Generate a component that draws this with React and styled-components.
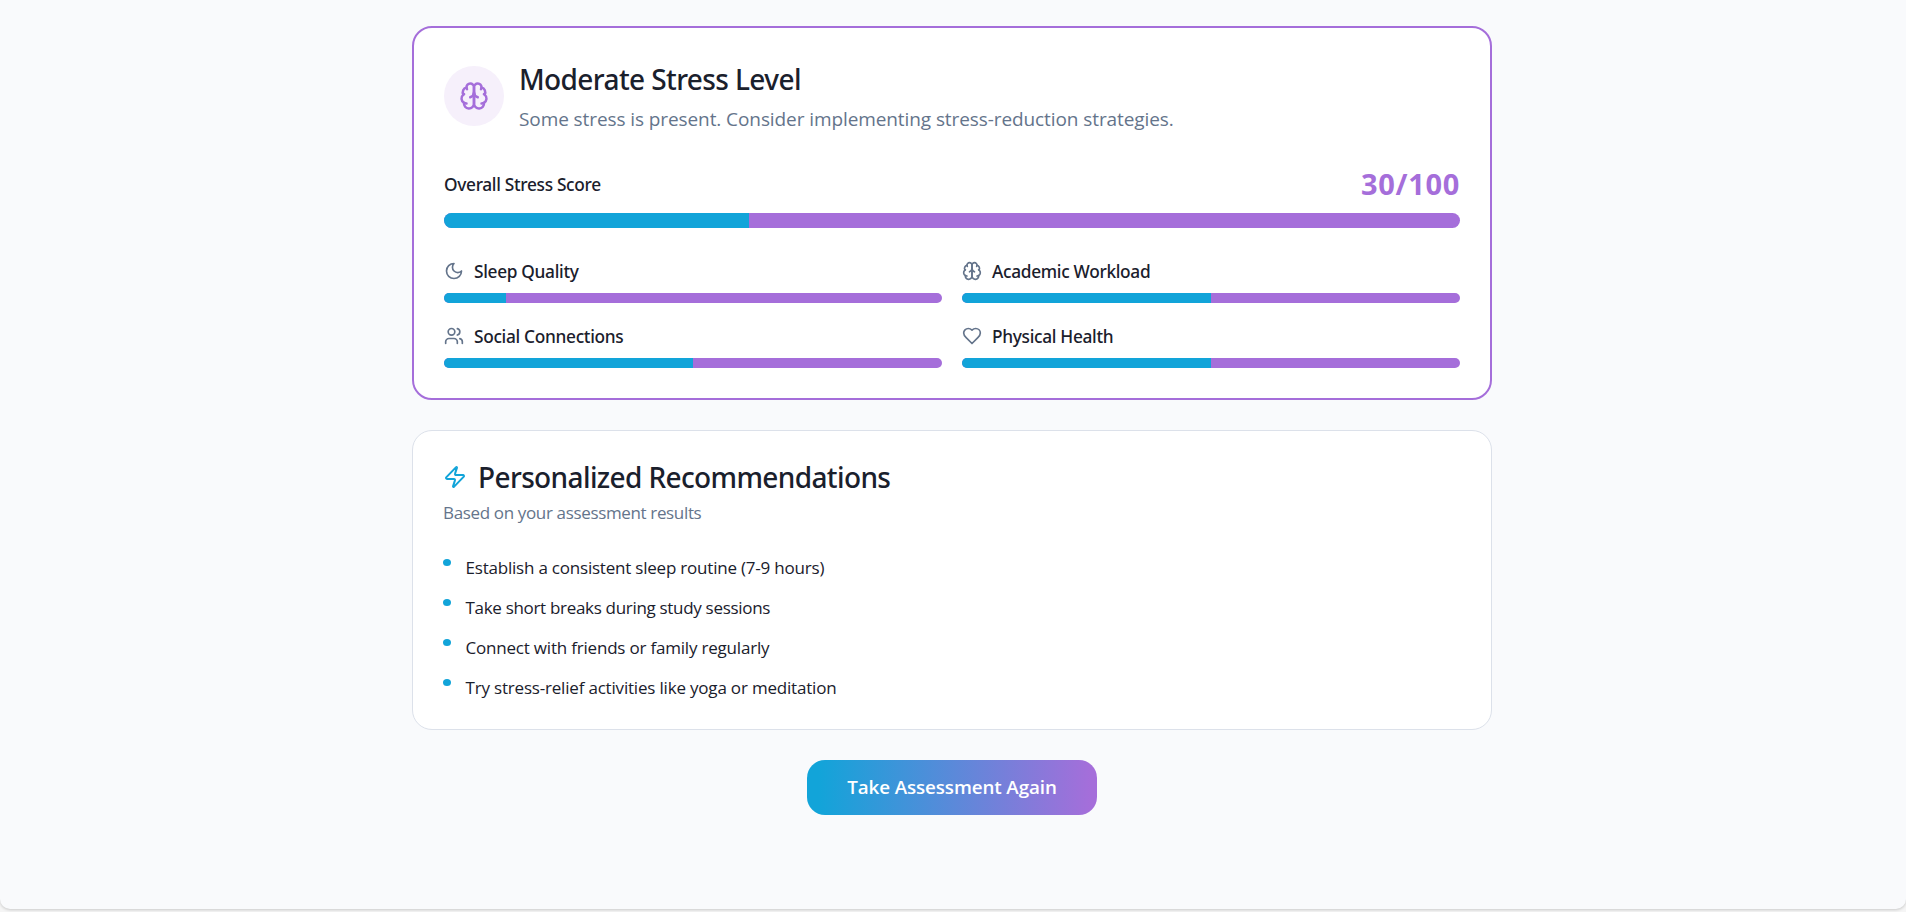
import React from "react";
import styled, { createGlobalStyle } from "styled-components";

const BLUE = "#12a4d9";
const PURPLE = "#a56eda";
const INK = "#1a202c";
const MUTED = "#64748b";

const GlobalStyle = createGlobalStyle`
  *, *::before, *::after { box-sizing: border-box; }
  body {
    margin: 0;
    background: #f5f5f5;
    color: ${INK};
    font-family: "Open Sans", "Noto Sans", sans-serif;
  }
`;

const Page = styled.div`
  height: 912px;
  overflow: hidden;
`;

const Shell = styled.main`
  height: 909px;
  padding: 26px 2px 0 0;
  display: flex;
  flex-direction: column;
  align-items: center;
  gap: 30px;
  background: #f9fafc;
  border-radius: 0 0 10px 10px;
  box-shadow: 0 1px 3px rgba(0, 0, 0, 0.18);
`;

const Card = styled.section`
  width: 1080px;
  padding: 30px;
  background: #fff;
  border: 1px solid #dce1ea;
  border-radius: 20px;
`;

const ResultCard = styled(Card)`
  height: 374px;
  border: 2px solid ${PURPLE};
`;

const AdviceCard = styled(Card)`
  height: 300px;
`;

const ResultHeader = styled.header`
  display: flex;
  align-items: center;
  gap: 15px;
  margin-bottom: 31px;
`;

const IconBadge = styled.div`
  display: grid;
  place-items: center;
  width: 60px;
  height: 60px;
  border-radius: 50%;
  color: ${PURPLE};
  background: #f6f0fb;
`;

const Title = styled.h2`
  margin: 0;
  font: 500 28px/42px "Noto Sans", sans-serif;
  letter-spacing: -0.6px;
`;

const AdviceTitle = styled(Title)`
  line-height: 32px;
  letter-spacing: -0.62px;
`;

const Summary = styled.p`
  margin: 4px 0 0;
  font-size: 19px;
  line-height: 30px;
  letter-spacing: -0.09px;
  color: ${MUTED};
`;

const ScoreRow = styled.div`
  display: flex;
  align-items: center;
  justify-content: space-between;
  height: 38px;
  margin-bottom: 10px;
`;

const Label = styled.span`
  padding-top: 2px;
  font: 500 17.3px/26px "Noto Sans", sans-serif;
  letter-spacing: -0.31px;
`;

const Score = styled.strong`
  font-size: 29px;
  line-height: 38px;
  font-weight: 700;
  letter-spacing: 0.7px;
  color: ${PURPLE};
`;

const Track = styled.div`
  height: ${(p) => (p.$large ? 15 : 10)}px;
  border-radius: ${(p) => (p.$large ? 8 : 5)}px;
  overflow: hidden;
  background: ${PURPLE};
`;

const Fill = styled.div`
  width: ${(p) => p.$value}%;
  height: 100%;
  background: ${BLUE};
`;

const FactorGrid = styled.div`
  display: grid;
  grid-template-columns: 1fr 1fr;
  gap: 20px;
  margin-top: 30px;
`;

const FactorHeader = styled.div`
  display: flex;
  align-items: center;
  gap: 10px;
  height: 25px;
  margin-bottom: 10px;
  svg { color: ${MUTED}; }
`;

const AdviceHeader = styled.div`
  display: flex;
  align-items: center;
  gap: 11px;
  height: 32px;
  svg { color: ${BLUE}; }
`;

const Hint = styled.p`
  margin: 6px 0 29px;
  font-size: 17px;
  line-height: 27px;
  letter-spacing: -0.35px;
  color: ${MUTED};
`;

const Tips = styled.ul`
  display: flex;
  flex-direction: column;
  gap: 15px;
  margin: 0;
  padding: 0;
  list-style: none;
`;

const Tip = styled.li`
  display: flex;
  align-items: flex-start;
  gap: 14.5px;
  font-size: 17px;
  line-height: 25px;
  letter-spacing: ${(p) => p.$tracking}px;
  &::before {
    content: "";
    width: 8px;
    height: 7px;
    margin-top: 4px;
    border-radius: 50%;
    background: ${BLUE};
  }
`;

const RetakeButton = styled.button`
  width: 290px;
  height: 55px;
  padding: 0;
  border: 0;
  border-radius: 18px;
  color: #fff;
  background: linear-gradient(to right, ${BLUE} 4%, ${PURPLE} 98%);
  font: 600 18.8px/55px "Open Sans", sans-serif;
  letter-spacing: -0.1px;
`;

const Svg = ({ size = 20, children }) => (
  <svg width={size} height={size} viewBox="0 0 24 24" fill="none" stroke="currentColor"
    strokeWidth="2" strokeLinecap="round" strokeLinejoin="round">
    {children}
  </svg>
);

const BrainIcon = (props) => (
  <Svg {...props}>
    <path d="M12 5a3 3 0 1 0-5.997.125 4 4 0 0 0-2.526 5.77 4 4 0 0 0 .556 6.588A4 4 0 1 0 12 18Z" />
    <path d="M12 5a3 3 0 1 1 5.997.125 4 4 0 0 1 2.526 5.77 4 4 0 0 1-.556 6.588A4 4 0 1 1 12 18Z" />
    <path d="M15 13a4.5 4.5 0 0 1-3-4 4.5 4.5 0 0 1-3 4" />
    <path d="M17.599 6.5a3 3 0 0 0 .399-1.375" />
    <path d="M6.003 5.125A3 3 0 0 0 6.401 6.5" />
    <path d="M3.477 10.896a4 4 0 0 1 .585-.396" />
    <path d="M19.938 10.5a4 4 0 0 1 .585.396" />
    <path d="M6 18a4 4 0 0 1-1.967-.516" />
    <path d="M19.967 17.484A4 4 0 0 1 18 18" />
  </Svg>
);

const MoonIcon = () => (
  <Svg><path d="M12 3a6 6 0 0 0 9 9 9 9 0 1 1-9-9Z" /></Svg>
);

const UsersIcon = () => (
  <Svg>
    <path d="M16 21v-2a4 4 0 0 0-4-4H6a4 4 0 0 0-4 4v2" />
    <circle cx="9" cy="7" r="4" />
    <path d="M22 21v-2a4 4 0 0 0-3-3.87" />
    <path d="M16 3.13a4 4 0 0 1 0 7.75" />
  </Svg>
);

const HeartIcon = () => (
  <Svg>
    <path d="M19 14c1.49-1.46 3-3.21 3-5.5A5.5 5.5 0 0 0 16.5 3c-1.76 0-3 .5-4.5 2-1.5-1.5-2.74-2-4.5-2A5.5 5.5 0 0 0 2 8.5c0 2.3 1.5 4.05 3 5.5l7 7Z" />
  </Svg>
);

const ZapIcon = () => (
  <Svg size={24}>
    <path d="M4 14a1 1 0 0 1-.78-1.63l9.9-10.2a.5.5 0 0 1 .86.46l-1.92 6.02A1 1 0 0 0 13 10h7a1 1 0 0 1 .78 1.63l-9.9 10.2a.5.5 0 0 1-.86-.46l1.92-6.02A1 1 0 0 0 11 14z" />
  </Svg>
);

const factors = [
  { name: "Sleep Quality", value: 12.5, Icon: MoonIcon },
  { name: "Academic Workload", value: 50, Icon: BrainIcon },
  { name: "Social Connections", value: 50, Icon: UsersIcon },
  { name: "Physical Health", value: 50, Icon: HeartIcon },
];

const tips = [
  { text: "Establish a consistent sleep routine (7-9 hours)", tracking: -0.21 },
  { text: "Take short breaks during study sessions", tracking: -0.31 },
  { text: "Connect with friends or family regularly", tracking: -0.2 },
  { text: "Try stress-relief activities like yoga or meditation", tracking: -0.19 },
];

export default function App() {
  return (
    <Page>
      <GlobalStyle />
      <Shell>
        <ResultCard>
          <ResultHeader>
            <IconBadge><BrainIcon size={30} /></IconBadge>
            <div>
              <Title>Moderate Stress Level</Title>
              <Summary>Some stress is present. Consider implementing stress-reduction strategies.</Summary>
            </div>
          </ResultHeader>
          <ScoreRow>
            <Label>Overall Stress Score</Label>
            <Score>30/100</Score>
          </ScoreRow>
          <Track $large><Fill $value={30} /></Track>
          <FactorGrid>
            {factors.map(({ name, value, Icon }) => (
              <div key={name}>
                <FactorHeader>
                  <Icon />
                  <Label>{name}</Label>
                </FactorHeader>
                <Track><Fill $value={value} /></Track>
              </div>
            ))}
          </FactorGrid>
        </ResultCard>
        <AdviceCard>
          <AdviceHeader>
            <ZapIcon />
            <AdviceTitle>Personalized Recommendations</AdviceTitle>
          </AdviceHeader>
          <Hint>Based on your assessment results</Hint>
          <Tips>
            {tips.map((tip) => (
              <Tip key={tip.text} $tracking={tip.tracking}>{tip.text}</Tip>
            ))}
          </Tips>
        </AdviceCard>
        <RetakeButton type="button">Take Assessment Again</RetakeButton>
      </Shell>
    </Page>
  );
}
